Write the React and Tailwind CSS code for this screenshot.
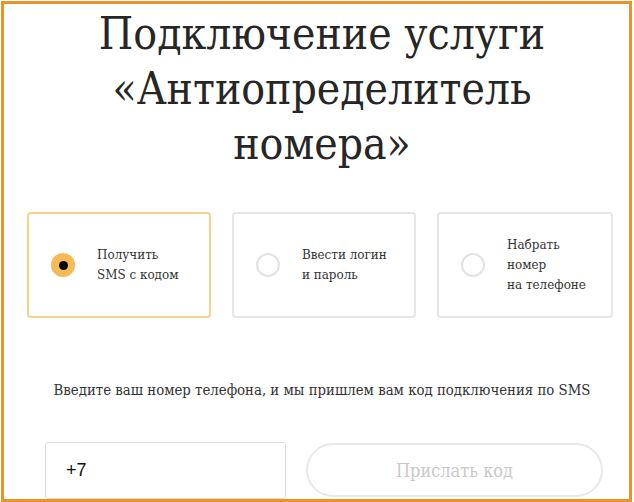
import React, { useState } from "react";

const SERIF = { fontFamily: '"DejaVu Serif Condensed", "DejaVu Serif", "Liberation Serif", serif' };

const OPTIONS = [
  { id: "sms", lines: ["Получить", "SMS с кодом"], width: "w-[184px]" },
  { id: "login", lines: ["Ввести логин", "и пароль"], width: "w-[184px]" },
  { id: "dial", lines: ["Набрать", "номер", "на телефоне"], width: "w-[176px]" },
];

const Radio = ({ checked }) =>
  checked ? (
    <span className="w-[24px] h-[24px] shrink-0 rounded-full bg-[#f6bb57] flex items-center justify-center">
      <span className="w-[9px] h-[9px] rounded-full bg-black" />
    </span>
  ) : (
    <span className="w-[24px] h-[24px] shrink-0 rounded-full border-2 border-[#e2e2e2] bg-white" />
  );

const App = () => {
  const [method, setMethod] = useState("sms");
  const [phone, setPhone] = useState("+7");

  return (
    <div className="w-[634px] h-[502px] bg-white pt-px pl-px pr-[2px] overflow-hidden" style={SERIF}>
      <div className="h-[501px] border-[3px] border-[#e8932b] overflow-hidden pl-[23px] pr-[17px]">
        <h1 className="pl-[5px] pt-[2px] text-center text-[44px] leading-[55px] font-normal text-[#262626]">
          Подключение услуги
          <br />
          «Антиопределитель
          <br />
          номера»
        </h1>

        <div className="mt-[41px] flex gap-[21px]">
          {OPTIONS.map((o) => {
            const checked = method === o.id;
            return (
              <button
                key={o.id}
                type="button"
                onClick={() => setMethod(o.id)}
                className={
                  o.width +
                  " flex-none h-[106px] rounded-[4px] border-2 bg-white flex items-center gap-[22px] pl-[22px] text-left " +
                  (checked ? "border-[#f3d28e]" : "border-[#e6e6e6]")
                }
              >
                <Radio checked={checked} />
                <span className="text-[13.3px] leading-[20px] text-[#333]">
                  {o.lines.map((l) => (
                    <span key={l} className="block">
                      {l}
                    </span>
                  ))}
                </span>
              </button>
            );
          })}
        </div>

        <p className="mt-[62px] pl-[5px] text-center text-[14.8px] leading-[20px] text-[#333]">
          Введите ваш номер телефона, и мы пришлем вам код подключения по SMS
        </p>

        <div className="mt-[42px] flex items-start pl-[18px]">
          <input
            value={phone}
            onChange={(e) => setPhone(e.target.value)}
            className="w-[241px] h-[57px] rounded-[3px] border border-[#dcdcdc] pl-[20px] text-[18px] text-[#111] outline-none"
            style={{ fontFamily: '"Liberation Sans", Arial, sans-serif' }}
          />
          <button
            type="button"
            disabled
            className="ml-[20px] mt-px w-[297px] h-[54px] rounded-full border-2 border-[#e8e8e8] bg-white text-[18px] text-[#c9c9c9]"
          >
            Прислать код
          </button>
        </div>
      </div>
    </div>
  );
};

export default App;
